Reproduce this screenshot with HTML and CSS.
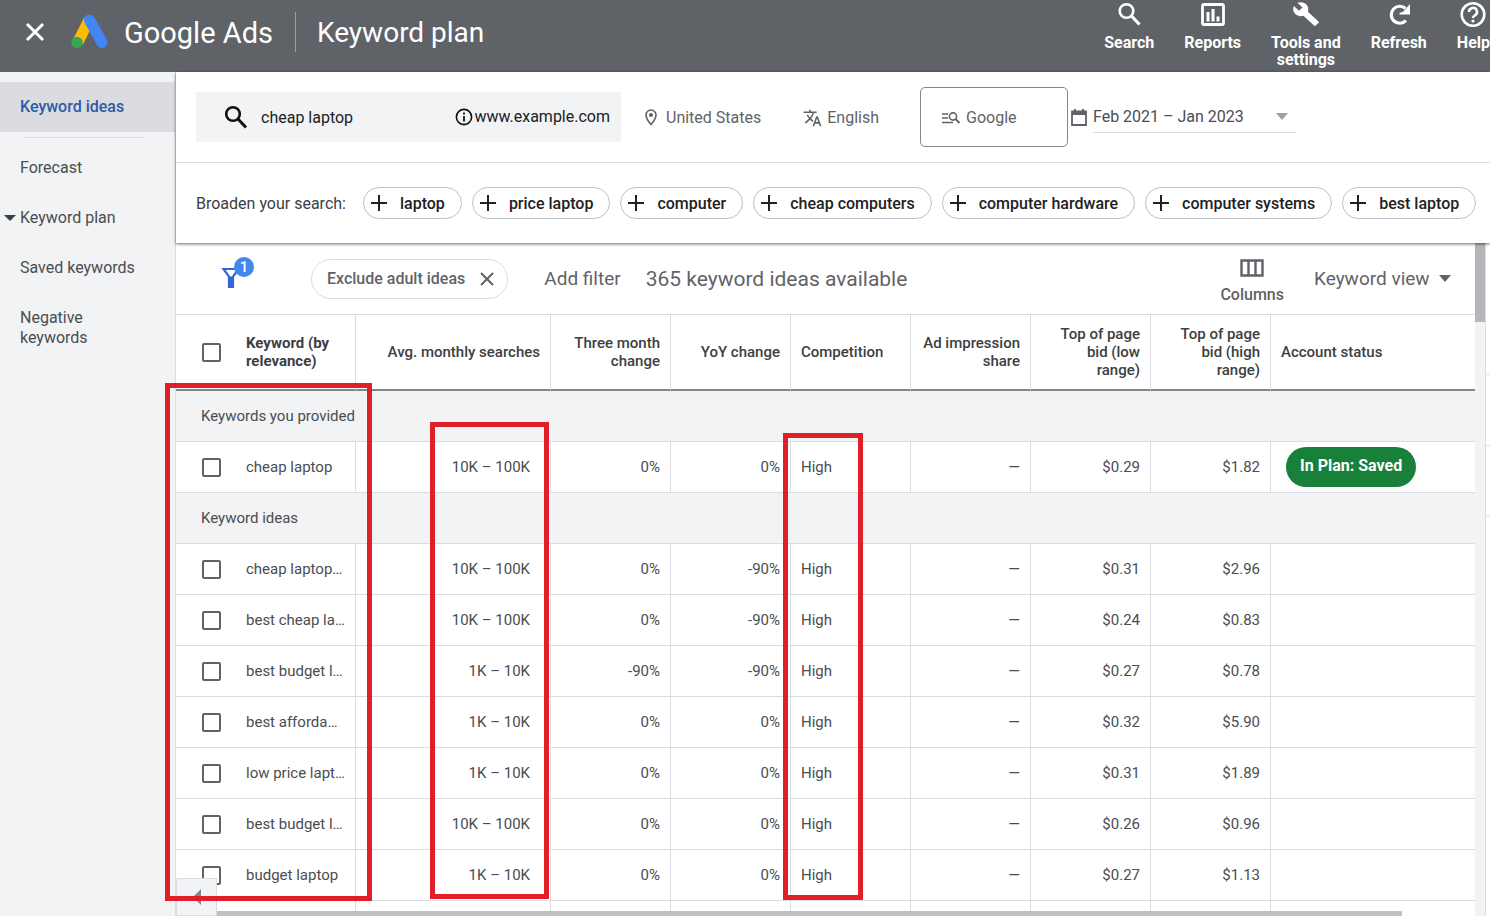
FILE: index.html
```html
<!DOCTYPE html>
<html lang="en">
<head>
  <meta charset="UTF-8">
  <meta name="viewport" content="width=device-width, initial-scale=1">
  <title>Keyword plan - Google Ads</title>
  <link rel="stylesheet" href="styles.css">
</head>
<body>
  <header class="top-bar">
    <button class="close-btn" aria-label="Close"><svg width="20" height="20" viewBox="0 0 20 20"><path d="M2 2l16 16M18 2L2 18" stroke="#fff" stroke-width="3" fill="none"/></svg></button>
    <svg class="logo" width="38" height="36" viewBox="0 0 38 36">
      <path d="M18 6L7 28" stroke="#fbbc04" stroke-width="11" fill="none"/>
      <path d="M18.500 6L31 28.500" stroke="#4285f4" stroke-width="11" stroke-linecap="round"/>
      <circle cx="6" cy="28.500" r="5.700" fill="#34a853"/>
    </svg>
    <span class="brand">Google Ads</span>
    <h1 class="page-title">Keyword plan</h1>
    <nav class="top-nav">
      <button class="nav-btn"><svg width="26" height="26" viewBox="0 0 26 26"><circle cx="10.500" cy="10" r="6.800" fill="none" stroke="#fff" stroke-width="2.600"/><path d="M15.500 15l8 8.500" stroke="#fff" stroke-width="3.200"/></svg><span>Search</span></button>
      <button class="nav-btn"><svg width="26" height="26" viewBox="0 0 26 26"><rect x="2.500" y="3.500" width="21" height="20" rx="1.500" fill="none" stroke="#fff" stroke-width="2.800"/><path d="M8 11v9.500M13 8v12.500M18 15.500v5" stroke="#fff" stroke-width="3"/></svg><span>Reports</span></button>
      <button class="nav-btn"><svg width="28" height="26" viewBox="0 0 24 24" preserveAspectRatio="none"><path fill="#fff" d="M22.700 19l-9.100-9.100c.9-2.300.4-5-1.500-6.900-2-2-5-2.400-7.400-1.300L9 6 6 9 1.600 4.700C.4 7.100.9 10.100 2.900 12.100c1.900 1.900 4.600 2.400 6.900 1.500l9.100 9.100c.4.4 1 .4 1.400 0l2.300-2.300c.5-.4.5-1.100.1-1.400z"/></svg><span>Tools and<br>settings</span></button>
      <button class="nav-btn"><svg width="26" height="26" viewBox="0 0 26 26"><path d="M20 19.500a8.500 8.500 0 1 1-.5-12" fill="none" stroke="#fff" stroke-width="3.200"/><path d="M24 3v10.500H13.500v-1.500l4-1.500z" fill="#fff"/></svg><span>Refresh</span></button>
      <button class="nav-btn"><svg width="26" height="26" viewBox="0 0 26 26"><circle cx="13" cy="13.500" r="11.300" fill="none" stroke="#fff" stroke-width="2.600"/><path d="M9 11a4 4 0 1 1 6 3.300c-1.300.8-2 1.400-2 2.700" fill="none" stroke="#fff" stroke-width="2.500"/><circle cx="13" cy="20" r="1.600" fill="#fff"/></svg><span>Help</span></button>
    </nav>
  </header>

  <div class="layout">
    <nav class="sidebar">
      <a class="side-link active" href="#ideas">Keyword ideas</a>
      <hr class="side-divider">
      <a class="side-link" href="#forecast">Forecast</a>
      <a class="side-link expandable" href="#plan">Keyword plan</a>
      <a class="side-link" href="#saved">Saved keywords</a>
      <a class="side-link" href="#negative">Negative<br>keywords</a>
    </nav>

    <main class="main">
      <section class="query">
        <div class="query-row">
          <div class="search-box">
            <svg width="24" height="24" viewBox="0 0 24 24"><circle cx="9" cy="9" r="6.800" fill="none" stroke="#111" stroke-width="2.600"/><path d="M14 14l8 8.500" stroke="#111" stroke-width="3"/></svg>
            <input class="search-input" type="text" value="cheap laptop" aria-label="Keywords">
            <button class="site-btn"><svg width="18" height="18" viewBox="0 0 18 18"><circle cx="9" cy="9" r="7.600" fill="none" stroke="#111" stroke-width="1.600"/><path d="M9 8v5.500M9 4.500v2" stroke="#111" stroke-width="1.800"/></svg>www.example.com</button>
          </div>
          <button class="setting location"><svg width="12" height="17" viewBox="0 0 12 17"><path d="M6 1a5 5 0 0 0-5 5c0 3.700 5 9.600 5 9.600S11 9.700 11 6a5 5 0 0 0-5-5z" fill="none" stroke="#5f6368" stroke-width="1.600"/><circle cx="6" cy="6" r="2" fill="#5f6368"/></svg>United States</button>
          <button class="setting language"><svg width="19" height="18" viewBox="1 1 22 22"><path fill="#5f6368" d="M12.870 15.070l-2.540-2.510.03-.03A17.520 17.520 0 0 0 14.070 6H17V4h-7V2H8v2H1v2h11.170C11.500 7.920 10.440 9.750 9 11.350 8.070 10.320 7.300 9.190 6.690 8h-2c.73 1.630 1.730 3.170 2.980 4.560l-5.090 5.020L4 19l5-5 3.110 3.110.76-2.040zM18.500 10h-2L12 22h2l1.120-3h4.750L21 22h2l-4.500-12zm-2.620 7l1.620-4.330L19.120 17h-3.240z"/></svg>English</button>
          <button class="setting network"><svg width="18" height="14" viewBox="0 0 18 14"><path d="M0 3h6M0 7h6M0 11.500h11" stroke="#5f6368" stroke-width="1.600"/><circle cx="11" cy="5.500" r="3.600" fill="none" stroke="#5f6368" stroke-width="1.600"/><path d="M13.500 8l4 4" stroke="#5f6368" stroke-width="1.800"/></svg>Google</button>
          <svg class="calendar" width="16" height="17" viewBox="0 0 16 17"><path d="M1 2.500h14V16H1z" fill="none" stroke="#5f6368" stroke-width="1.800"/><path d="M1 2h14v4H1zM3 0h2v3H3zM11 0h2v3h-2z" fill="#5f6368"/></svg>
          <label class="date-range">
            <select aria-label="Date range"><option>Feb 2021 – Jan 2023</option></select>
            <span class="arrow light"></span>
          </label>
        </div>
        <div class="broaden-row">
          <span class="broaden-label">Broaden your search:</span>
          <button class="chip">laptop</button>
          <button class="chip">price laptop</button>
          <button class="chip">computer</button>
          <button class="chip">cheap computers</button>
          <button class="chip">computer hardware</button>
          <button class="chip">computer systems</button>
          <button class="chip">best laptop</button>
        </div>
      </section>

      <section class="results">
        <div class="pane">
          <div class="toolbar">
            <button class="filter-btn" aria-label="Filters"><svg width="20" height="24" viewBox="0 0 20 24"><path d="M2.500 2h15L12 9.500V20H8V9.500z" fill="none" stroke="#3367d6" stroke-width="2.200"/><path d="M8 9.500h4V20H8z" fill="#3367d6"/></svg><span class="badge">1</span></button>
            <button class="filter-chip">Exclude adult ideas<svg width="14" height="14" viewBox="0 0 14 14"><path d="M1 1l12 12M13 1L1 13" stroke="#5f6368" stroke-width="2" fill="none"/></svg></button>
            <button class="add-filter">Add filter</button>
            <span class="count">365 keyword ideas available</span>
            <button class="columns-btn"><svg width="24" height="18" viewBox="0 0 24 18"><path d="M1.500 1.500h21v15h-21zM8.500 1v16M15.500 1v16" fill="none" stroke="#5f6368" stroke-width="2.400"/></svg>Columns</button>
            <label class="view">
              <select aria-label="View"><option>Keyword view</option></select>
              <span class="arrow"></span>
            </label>
          </div>

          <table class="ideas">
            <colgroup>
              <col class="col-check"><col class="col-num"><col class="col-avg">
              <col class="col-num"><col class="col-num"><col class="col-num"><col class="col-num"><col class="col-num"><col class="col-num">
              <col>
            </colgroup>
            <thead>
              <tr>
                <th class="check"><input type="checkbox" aria-label="Select all"></th>
                <th class="text key">Keyword (by relevance)</th>
                <th>Avg. monthly searches</th>
                <th>Three month change</th>
                <th>YoY change</th>
                <th class="text">Competition</th>
                <th>Ad impression share</th>
                <th>Top of page bid (low range)</th>
                <th>Top of page bid (high range)</th>
                <th class="text">Account status</th>
              </tr>
            </thead>
            <tbody>
              <tr class="group"><td colspan="10">Keywords you provided</td></tr>
              <tr><td class="check"><input type="checkbox" aria-label="cheap laptop"></td><td class="text">cheap laptop</td><td class="avg">10K – 100K</td><td>0%</td><td>0%</td><td class="text">High</td><td>—</td><td>$0.29</td><td>$1.82</td><td class="text status"><span class="saved">In Plan: Saved</span></td></tr>
              <tr class="group"><td colspan="10">Keyword ideas</td></tr>
              <tr><td class="check"><input type="checkbox" aria-label="cheap laptop idea"></td><td class="text">cheap laptop…</td><td class="avg">10K – 100K</td><td>0%</td><td>-90%</td><td class="text">High</td><td>—</td><td>$0.31</td><td>$2.96</td><td></td></tr>
              <tr><td class="check"><input type="checkbox" aria-label="best cheap laptop"></td><td class="text">best cheap la…</td><td class="avg">10K – 100K</td><td>0%</td><td>-90%</td><td class="text">High</td><td>—</td><td>$0.24</td><td>$0.83</td><td></td></tr>
              <tr><td class="check"><input type="checkbox" aria-label="best budget laptop"></td><td class="text">best budget l…</td><td class="avg">1K – 10K</td><td>-90%</td><td>-90%</td><td class="text">High</td><td>—</td><td>$0.27</td><td>$0.78</td><td></td></tr>
              <tr><td class="check"><input type="checkbox" aria-label="best affordable laptop"></td><td class="text">best afforda…</td><td class="avg">1K – 10K</td><td>0%</td><td>0%</td><td class="text">High</td><td>—</td><td>$0.32</td><td>$5.90</td><td></td></tr>
              <tr><td class="check"><input type="checkbox" aria-label="low price laptop"></td><td class="text">low price lapt…</td><td class="avg">1K – 10K</td><td>0%</td><td>0%</td><td class="text">High</td><td>—</td><td>$0.31</td><td>$1.89</td><td></td></tr>
              <tr><td class="check"><input type="checkbox" aria-label="best budget laptops"></td><td class="text">best budget l…</td><td class="avg">10K – 100K</td><td>0%</td><td>0%</td><td class="text">High</td><td>—</td><td>$0.26</td><td>$0.96</td><td></td></tr>
              <tr><td class="check"><input type="checkbox" aria-label="budget laptop"></td><td class="text">budget laptop</td><td class="avg">1K – 10K</td><td>0%</td><td>0%</td><td class="text">High</td><td>—</td><td>$0.27</td><td>$1.13</td><td></td></tr>
              <tr><td class="check"></td><td></td><td></td><td></td><td></td><td></td><td></td><td></td><td></td><td></td></tr>
            </tbody>
          </table>
          <div class="scroll-x">
            <button class="scroll-left" aria-label="Scroll left"></button>
            <div class="thumb-x"></div>
          </div>
        </div>
        <div class="scroll-y"><div class="thumb-y"></div></div>
        <div class="edge"><i></i><i></i><i></i></div>

        <!-- highlighted columns -->
        <div class="mark mark-keywords"></div>
        <div class="mark mark-searches"></div>
        <div class="mark mark-competition"></div>
      </section>
    </main>
  </div>
</body>
</html>
```
FILE: styles.css
```css
* { box-sizing: border-box; }
html, body { margin: 0; height: 100%; overflow: hidden; }
body {
  display: flex; flex-direction: column;
  font-family: Roboto, "Liberation Sans", sans-serif;
  font-size: 16px; line-height: 20px; color: #3c4043; background: #fff;
}
button, input, select { font: inherit; color: inherit; background: none; border: none; padding: 0; margin: 0; }
button, select { cursor: pointer; }
select { appearance: none; outline: none; }
svg { display: block; flex: none; }

/* header */
.top-bar { display: flex; align-items: center; flex: none; height: 72px; background: #5f6368; color: #fff; padding-left: 25px; }
.close-btn { margin-top: -8px; }
.logo { margin: -8px 15px 0 26px; }
.brand, .page-title { padding-top: 2px; font-size: 28px; line-height: 38px; font-weight: 400; margin: 0 0 8px; white-space: nowrap; }
.brand { padding-right: 22px; border-right: 1px solid #9aa0a6; font-size: 29px; }
.page-title { padding-left: 21px; }
.top-nav { display: flex; gap: 30px; margin-left: auto; padding-top: 1px; align-self: flex-start; }
.nav-btn { display: flex; flex-direction: column; align-items: center; gap: 7px; font-size: 16px; line-height: 17px; font-weight: 700; }

/* sidebar */
.layout { display: flex; flex: 1; min-height: 0; }
.sidebar { flex: none; width: 176px; padding-top: 10px; background: #f1f3f4; border-right: 1px solid #dadce0; }
.side-link { display: block; position: relative; padding: 16px 10px 14px 20px; color: #4a4d51; text-decoration: none; }
.side-link.active { padding: 15px 10px 15px 20px; background: #dadce0; color: #2f5aa8; font-weight: 500; }
.side-link.expandable::before {
  content: ""; position: absolute; left: 4px; top: 23px;
  border: 6px solid transparent; border-top-color: #3c4043; border-bottom: none;
}
.side-divider { height: 1px; margin: 5px 31px 4px 24px; border: none; background: #dadce0; }

/* search settings */
.main { display: flex; flex-direction: column; flex: 1; min-width: 0; }
.query { position: relative; z-index: 2; flex: none; background: #fff; box-shadow: 0 1px 3px #00000099; }
.query-row { display: flex; align-items: center; height: 91px; padding-left: 20px; border-bottom: 1px solid #dadce0; white-space: nowrap; }
.search-box { display: flex; align-items: center; flex: 0 1 425px; min-width: 0; height: 50px; padding: 0 11px 0 28px; background: #f1f3f4; color: #202124; }
.search-input { flex: 1; width: 0; min-width: 0; margin-left: 13px; padding-top: 1px; outline: none; }
.site-btn { display: flex; align-items: center; gap: 1px; }
.setting { display: flex; align-items: center; padding-top: 1px; color: #5f6368; }
.location { gap: 9px; margin-left: 24px; }
.language { gap: 5px; margin-left: 42px; }
.network { gap: 6px; width: 148px; height: 60px; margin-left: 41px; padding-left: 21px; border: 1px solid #80868b; border-radius: 5px; }
.calendar { margin-left: 3px; }
.date-range { display: flex; align-items: center; justify-content: space-between; width: 203px; height: 32px; margin-left: 6px; padding-right: 8px; border-bottom: 1px solid #dadce0; color: #4a4d51; }
.arrow { border: 6px solid transparent; border-top: 7px solid #5f6368; border-bottom: none; }
.arrow.light { border-top-color: #9aa0a6; }

.broaden-row { display: flex; align-items: center; gap: 10px; height: 80px; padding-left: 20px; white-space: nowrap; }
.broaden-label { margin-right: 7px; padding-top: 1px; }
.chip { display: flex; align-items: center; height: 32px; padding: 1px 16px 0 7px; border: 1px solid #bdc1c6; border-radius: 16px; font-weight: 500; color: #202124; }
.chip::before {
  content: ""; width: 16px; height: 16px; margin: 0 13px 2px 0;
  background: linear-gradient(#202124, #202124) center / 16px 2px no-repeat, linear-gradient(#202124, #202124) center / 2px 16px no-repeat;
}

/* results */
.results { position: relative; display: flex; flex: 1; min-height: 0; }
.pane { position: relative; flex: 1; min-width: 0; overflow: hidden; }
.toolbar { display: flex; align-items: center; height: 72px; padding-right: 24px; border-bottom: 1px solid #dadce0; color: #5f6368; white-space: nowrap; }
.filter-btn { position: relative; margin-left: 45px; }
.badge { position: absolute; left: 13px; top: -10px; width: 20px; height: 20px; border-radius: 50%; background: #4285f4; color: #fff; font-size: 15px; line-height: 20px; font-weight: 500; }
.filter-chip { display: flex; align-items: center; gap: 15px; height: 40px; margin-left: 70px; padding: 1px 13px 0 15px; border: 1px solid #dadce0; border-radius: 20px; font-weight: 500; }
.add-filter { margin-left: 36px; font-size: 19px; }
.count { margin-left: 25px; font-size: 21px; }
.columns-btn { display: flex; flex-direction: column; align-items: center; gap: 8px; margin: 6px 30px 0 auto; font-weight: 500; }
.view { display: flex; align-items: center; gap: 9px; font-size: 19px; }

.ideas { width: 100%; table-layout: fixed; border-collapse: separate; border-spacing: 0; font-size: 15px; line-height: 18px; }
.col-check { width: 60px; }
.col-avg { width: 195px; }
.col-num { width: 120px; }
.ideas th { height: 76px; padding: 0 10px; border-right: 1px solid #dadce0; border-bottom: 2px solid #80868b; font-weight: 500; text-align: right; }
.ideas td { height: 51px; padding: 0 10px; border-right: 1px solid #dadce0; border-bottom: 1px solid #dadce0; text-align: right; white-space: nowrap; color: #4a4d51; }
.ideas .text { text-align: left; }
.ideas th.key { font-weight: 700; }
.ideas .avg { padding-right: 20px; }
.ideas .check { padding: 0 0 0 26px; border-right: none; text-align: left; }
.ideas tr > :last-child { border-right: none; }
.ideas .group td { padding-left: 25px; background: #f1f3f4; text-align: left; }
.ideas input { display: block; appearance: none; width: 19px; height: 19px; border: 2px solid #5f6368; border-radius: 2px; }
.ideas input:checked { background: #4285f4; }
.ideas .status { padding-left: 15px; }
.saved { display: inline-block; height: 40px; padding: 0 14px; border-radius: 20px; background: #188038; color: #fff; font-size: 16px; font-weight: 700; line-height: 38px; vertical-align: middle; }

/* scrollbars */
.scroll-x { position: absolute; left: 0; right: 0; bottom: 0; display: flex; align-items: flex-end; }
.scroll-left { display: flex; align-items: center; width: 41px; height: 38px; padding-left: 16px; background: #f1f3f4; border: 1px solid #dadce0; }
.scroll-left::before { content: ""; border: 8px solid transparent; border-right-color: #80868b; border-left: none; }
.thumb-x { flex: 1; height: 5px; margin-right: 73px; background: #bdc1c6; }
.scroll-y { width: 10px; background: #f1f3f4; }
.thumb-y { height: 79px; background: #b4b6b9; }
.edge { width: 5px; padding-top: 61px; border-left: 1px solid #dadce0; }
.edge i { display: block; height: 71px; border-bottom: 1px solid #dadce0; }

.mark { position: absolute; z-index: 3; border: 5px solid #df2029; pointer-events: none; }
.mark-keywords { left: -11px; top: 140px; width: 207px; height: 518px; }
.mark-searches { left: 254px; top: 179px; width: 119px; height: 477px; }
.mark-competition { left: 607px; top: 190px; width: 80px; height: 467px; }
```
